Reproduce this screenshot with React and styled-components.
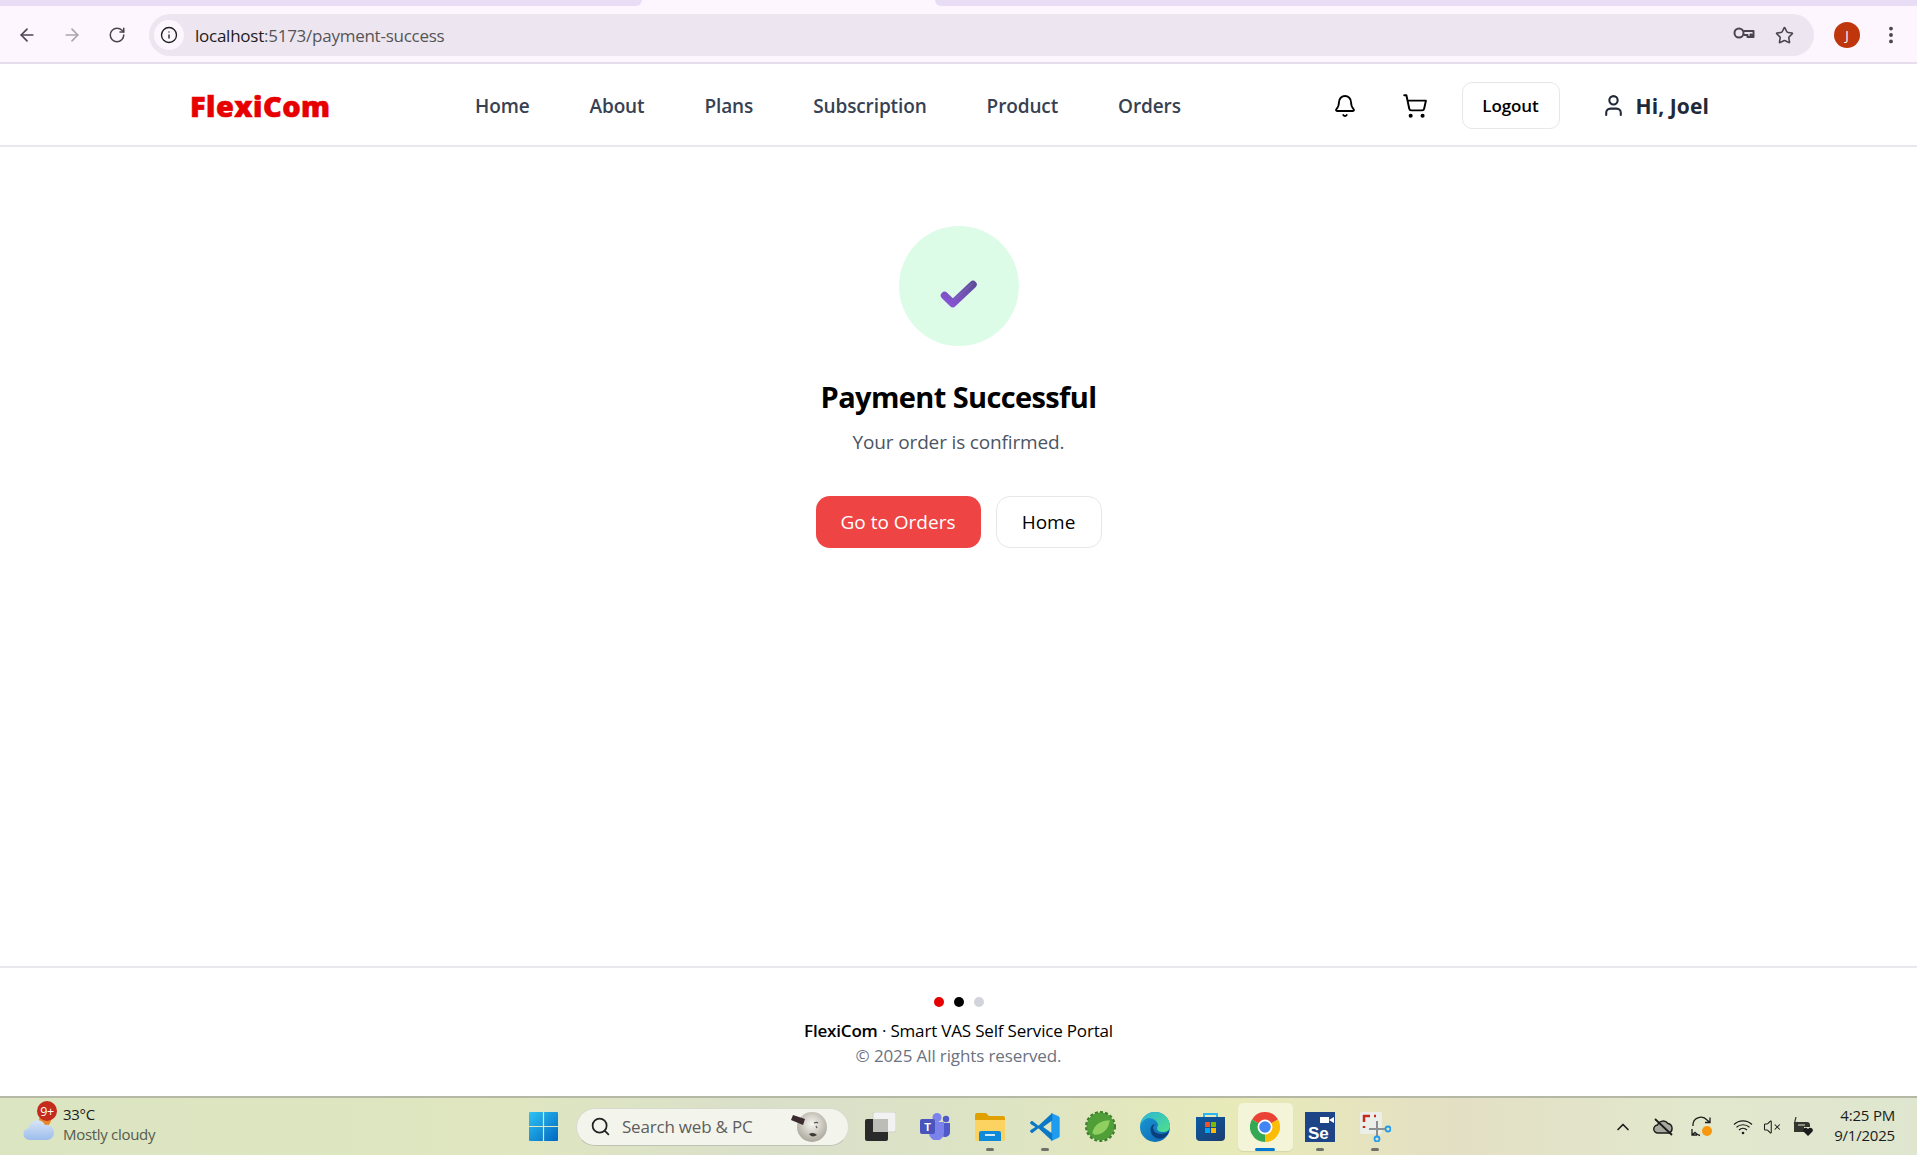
import React from "react";
import styled, { createGlobalStyle } from "styled-components";
import { ArrowLeft, ArrowRight, RotateCw, Info, Star, EllipsisVertical, Bell, ShoppingCart, User, Search, ChevronUp, VolumeX } from "lucide-react";

const Global = createGlobalStyle`
  html, body { margin: 0; padding: 0; height: 100%; background: #fff; }
  body { font-family: "Open Sans", "Noto Sans", "Liberation Sans", sans-serif; }
  * { box-sizing: border-box; }
`;

const Page = styled.div`
  width: 1917px; height: 1155px; display: flex; flex-direction: column; overflow: hidden; background: #fff;
`;

/* ---------- browser chrome ---------- */
const TabStrip = styled.div`
  height: 6px; flex: none; background: #fdf6ff; display: flex;
`;
const TabRest = styled.div`
  height: 6px; background: #e9dcf5; width: ${p => p.$w}; flex: ${p => p.$grow ? 1 : "none"};
  border-radius: ${p => p.$r};
  margin-left: ${p => p.$ml || 0};
`;
const Toolbar = styled.div`
  height: 58px; flex: none; background: #fdf6ff; border-bottom: 2px solid #e8dded; padding-top: 2px;
  display: flex; align-items: center; position: relative;
`;
const NavBtn = styled.span`
  width: 44px; height: 36px; display: flex; align-items: center; justify-content: center; flex: none;
  color: ${p => p.$dim ? "#aaa5ad" : "#4a454f"};
`;
const NavBtns = styled.div`
  display: flex; margin-left: 5px; margin-right: 10px; margin-top: -1px; gap: 1px;
`;
const Omnibox = styled.div`
  width: 1665px; height: 42px; border-radius: 21px; background: #ede6f1; display: flex; align-items: center; padding: 0 0 0 5px;
`;
const InfoBubble = styled.span`
  width: 30px; height: 30px; border-radius: 50%; background: #fdf6ff; display: flex; align-items: center; justify-content: center; color: #1f1f1f; flex: none;
`;
const Url = styled.div`
  margin-left: 11px; font-size: 17px; letter-spacing: -0.25px; color: #555; flex: 1;
  b { font-weight: 400; color: #1d1b20; }
`;
const OmniIcon = styled.span`
  width: 40px; display: flex; justify-content: center; color: #4a454f; flex: none;
`;
const OmniEnd = styled.div`
  display: flex; margin-right: 10px;
`;
const Avatar = styled.span`
  width: 26px; height: 26px; border-radius: 50%; background: #bf360c; color: #fff; font-size: 13px; display: flex; align-items: center; justify-content: center; margin-left: 20px; flex: none;
`;
const MenuBtn = styled.span`
  display: flex; margin-left: 20px; color: #4a454f;
`;

/* ---------- site header ---------- */
const SiteHeader = styled.header`
  height: 83px; flex: none; border-bottom: 2px solid #e8e9ec; background: #fff; display: flex; justify-content: center; padding-top: 2px;
`;
const HeaderInner = styled.div`
  width: 1537px; display: flex; align-items: center;
`;
const Logo = styled.div`
  width: 285px; font-weight: 800; font-size: 29px; color: #e60000; letter-spacing: 0.45px; -webkit-text-stroke: 0.6px #e60000;
`;
const Nav = styled.nav`
  display: flex; gap: 60px; flex: 1;
`;
const NavLink = styled.a`
  font-size: 19px; font-weight: 600; color: #374151; letter-spacing: -0.12px; white-space: nowrap;
`;
const HeaderRight = styled.div`
  display: flex; align-items: center; margin-right: 18px;
`;
const HeadIcon = styled.span`
  display: flex; color: #000; width: 70px; justify-content: center; flex: none;
`;
const LogoutBtn = styled.button`
  width: 98px; height: 47px; border: 1px solid #e5e7eb; border-radius: 10px; background: #fff; font: 600 17px "Open Sans", sans-serif; letter-spacing: -0.1px; color: #000; margin-left: 12px;
`;
const UserBox = styled.div`
  display: flex; align-items: center; gap: 10px; margin-left: 41px; color: #1f2937; font-size: 21px; font-weight: 700; letter-spacing: 0.1px;
`;

/* ---------- main ---------- */
const Main = styled.main`
  flex: 1; display: flex; flex-direction: column; align-items: center; padding-top: 79px; background: #fff;
`;
const SuccessCircle = styled.div`
  width: 120px; height: 120px; border-radius: 50%; background: #dcfce7; display: flex; align-items: center; justify-content: center; padding-top: 15px;
`;
const Title = styled.h1`
  margin: 31px 0 0; font-size: 29px; line-height: 40px; font-weight: 700; color: #000; letter-spacing: -0.62px;
`;
const Subtitle = styled.p`
  margin: 11px 0 0; font-size: 19px; line-height: 28px; color: #4b5563; letter-spacing: -0.15px;
`;
const Buttons = styled.div`
  display: flex; gap: 15px; margin-top: 40px;
`;
const Primary = styled.button`
  width: 165px; height: 52px; border: 0; border-radius: 14px; background: #ef4444; color: #fff; font: 400 19px "Open Sans", sans-serif;
`;
const Secondary = styled.button`
  width: 106px; height: 52px; border: 1px solid #e5e7eb; border-radius: 14px; background: #fff; color: #000; font: 400 19px "Open Sans", sans-serif;
`;

/* ---------- footer ---------- */
const Footer = styled.footer`
  height: 130px; flex: none; border-top: 2px solid #e8e9ec; background: #fff; display: flex; flex-direction: column; align-items: center; padding-top: 29px;
`;
const Dots = styled.div`
  display: flex; gap: 10px; height: 10px;
`;
const Dot = styled.span`
  width: 10px; height: 10px; border-radius: 50%; background: ${p => p.$c};
`;
const FootLine = styled.div`
  margin-top: 11px; font-size: 17px; line-height: 25px; color: #000; letter-spacing: -0.18px;
  b { font-weight: 600; }
`;
const FootCopy = styled.div`
  font-size: 17px; line-height: 25px; color: #6b7280; letter-spacing: -0.12px;
`;

/* ---------- taskbar ---------- */
const Taskbar = styled.div`
  height: 59px; flex: none; border-top: 2px solid #b5b8a4;
  background: linear-gradient(90deg, #dbe5c1 0%, #dfe6c0 27%, #dadfca 40%, #dde4c4 52%, #e8eab8 65%, #e3dfc4 76%, #e2e8cd 88%, #dfe6cf 100%);
  display: grid; grid-template-columns: 516px 1fr auto; align-items: center; position: relative;
`;
const Weather = styled.div`
  display: flex; align-items: center; padding-left: 23px; position: relative; margin-bottom: 5px;
`;
const Badge = styled.span`
  position: absolute; left: 37px; top: -3px; width: 20px; height: 20px; border-radius: 50%; background: #c42b1c; color: #fff; font-size: 12.5px; display: flex; align-items: center; justify-content: center; letter-spacing: -0.3px;
`;
const WeatherText = styled.div`
  margin-left: 9px; font-size: 15px; line-height: 20px; color: #1b1b1b; letter-spacing: -0.3px;
  small { display: block; font-size: 15px; color: #555a50; }
`;
const Center = styled.div`
  display: flex; align-items: center;
`;
const TaskItem = styled.div`
  width: ${p => p.$w || "55px"}; height: 48px; flex: none; display: flex; align-items: center; justify-content: center; position: relative;
  margin-left: ${p => p.$ml || 0};
  ${p => p.$active && "background: #f3f4d8; border-radius: 5px; box-shadow: 0 1px 1px rgba(0,0,0,.08);"}
`;
const RunDot = styled.span`
  position: absolute; bottom: 0; left: 50%; transform: translateX(-50%); width: ${p => p.$active ? "20px" : "8px"}; height: 3px; border-radius: 2px; background: ${p => p.$active ? "#0078d4" : "#6f7268"};
`;
const SearchPill = styled.div`
  width: 273px; height: 38px; margin-left: 5px; flex: none; border-radius: 19px; background: #f3f4ec; border: 1px solid #d8dacd; border-bottom-color: #bfc1b4; display: flex; align-items: center; padding-left: 13px; position: relative;
`;
const SearchText = styled.span`
  font-size: 17px; color: #5d5d5d; margin-left: 11px; flex: 1; letter-spacing: -0.2px;
`;
const MoonGap = styled.span`
  width: 20px; flex: none;
`;
const Tray = styled.div`
  display: flex; align-items: center; padding-right: 22px;
`;
const TrayIcon = styled.span`
  display: flex; justify-content: center; align-items: center; width: ${p => p.$w || "40px"}; color: #1c1c1c; flex: none;
`;
const Clock = styled.div`
  margin-left: 11px; margin-bottom: 4px; text-align: right; font-size: 15px; line-height: 20px; color: #1b1b1b; letter-spacing: -0.2px; white-space: nowrap;
`;

/* ---------- drawn icons ---------- */
const KeyIcon = () => (
  <svg width="22" height="14" viewBox="0 0 22 14" fill="none" stroke="#4a454f" strokeWidth="2">
    <circle cx="6" cy="7" r="4.5" /><path d="M10.5 5h10v6h-2V8.5h-1V11h-3V9h-4" strokeLinejoin="round" />
  </svg>
);
const Check = () => (
  <svg width="38" height="28" viewBox="0 0 38 28">
    <defs>
      <linearGradient id="chk" x1="0" y1="1" x2="1" y2="0"><stop offset="0" stopColor="#8a55d8" /><stop offset="1" stopColor="#5f4c9c" /></linearGradient>
    </defs>
    <path d="M4.500 15.500 L12.800 23.500 L33 4.500" fill="none" stroke="url(#chk)" strokeWidth="7.500" strokeLinecap="round" strokeLinejoin="round" />
    <path d="M14 20 L32 4" fill="none" stroke="#7a6cb0" strokeOpacity=".45" strokeWidth="2" strokeLinecap="round" />
  </svg>
);
const CloudIcon = () => (
  <svg width="31" height="36" viewBox="0 0 31 36">
    <defs><linearGradient id="cl" x1="0" y1="0" x2="0" y2="1"><stop offset="0" stopColor="#d6e4f7" /><stop offset="1" stopColor="#9dbdeb" /></linearGradient></defs>
    <circle cx="22" cy="14" r="6" fill="#e8862a" />
    <path d="M7 34a6 6 0 0 1-1-12 8.500 8.500 0 0 1 16-3 7 7 0 0 1 3 15z" fill="url(#cl)" />
  </svg>
);
const WinLogo = () => (
  <svg width="29" height="29" viewBox="0 0 29 29">
    <defs><linearGradient id="win" x1="0" y1="0" x2="1" y2="1"><stop offset="0" stopColor="#2ec3f5" /><stop offset="1" stopColor="#0067c0" /></linearGradient></defs>
    <path d="M1 0h12.900v13.900H0V1a1 1 0 0 1 1-1zM15.100 0H28a1 1 0 0 1 1 1v12.900H15.100zM0 15.100h13.900V29H1a1 1 0 0 1-1-1zM15.100 15.100H29V28a1 1 0 0 1-1 1H15.100z" fill="url(#win)" />
  </svg>
);
const MoonIcon = () => (
  <svg width="38" height="32" viewBox="0 0 38 32">
    <defs><radialGradient id="moon" cx=".5" cy=".4" r=".6"><stop offset="0" stopColor="#f7f6ef" /><stop offset="1" stopColor="#aaa79c" /></radialGradient></defs>
    <circle cx="22" cy="16" r="15" fill="url(#moon)" />
    <path d="M3 4l12 4-2 6L1 9z" fill="#3b2a2e" />
    <path d="M19 23c3-2 6-1 8 1-3 2-6 2-8-1z" fill="#3f3733" />
    <path d="M24 12c2-1 3-1 4 0M26 15l1 2" stroke="#555" strokeWidth="1.200" fill="none" />
  </svg>
);
const TaskView = () => (
  <svg width="31" height="29" viewBox="0 0 31 29">
    <rect x="8" y="0" width="23" height="20" rx="2" fill="#f2f2f2" stroke="#d0d0c8" />
    <rect x="0" y="7" width="23" height="22" rx="2" fill="#2a2a2a" />
    <rect x="8" y="7" width="15" height="13" fill="#bdbdb8" />
  </svg>
);
const Teams = () => (
  <svg width="31" height="27" viewBox="0 0 31 27">
    <circle cx="17" cy="4.500" r="4.500" fill="#7b83eb" /><circle cx="26" cy="6" r="3.200" fill="#5059c9" />
    <path d="M21 10h9v9a5 5 0 0 1-9 3z" fill="#5059c9" />
    <path d="M9 9h15v11a7 7 0 0 1-15 0z" fill="#7b83eb" />
    <rect x="0" y="6" width="15" height="15" rx="2" fill="#4b53bc" />
    <text x="7.500" y="17.500" fontSize="11" fontWeight="700" fill="#fff" textAnchor="middle" fontFamily="Liberation Sans">T</text>
  </svg>
);
const Folder = () => (
  <svg width="30" height="28" viewBox="0 0 30 28">
    <path d="M0 2a2 2 0 0 1 2-2h9l3 3h14a2 2 0 0 1 2 2v4H0z" fill="#e0a100" />
    <path d="M0 7h30v19a2 2 0 0 1-2 2H2a2 2 0 0 1-2-2z" fill="#fcd361" />
    <path d="M6 18h18a2 2 0 0 1 2 2v8H4v-8a2 2 0 0 1 2-2z" fill="#0f8ad8" />
    <rect x="10" y="21" width="10" height="2" fill="#cfe8fb" />
  </svg>
);
const VSCode = () => (
  <svg width="30" height="30" viewBox="0 0 100 100">
    <path d="M71 3l24 11c2 1 4 4 4 7v58c0 3-2 6-4 7L71 97V3z" fill="#1f9cf0" />
    <path d="M74 3 L28 46 9 31c-2-1-4-1-6 1l-2 2c-1 2-1 4 1 6l16 10L2 60c-2 2-2 4-1 6l2 2c2 2 4 2 6 1l19-15 46 43V72L44 50 74 28z" fill="#0a78c6" />
  </svg>
);
const Spring = () => (
  <svg width="31" height="31" viewBox="0 0 30 30">
    <circle cx="15" cy="15" r="13.500" fill="#4f9e38" />
    <circle cx="15" cy="15" r="14" fill="none" stroke="#3d7f2c" strokeWidth="2" strokeDasharray="3 2" />
    <path d="M7 21c2-8 9-12 17-12-1 8-6 14-14 14-1 0-2-1-3-2z" fill="#8fcf5f" />
  </svg>
);
const Edge = () => (
  <svg width="30" height="30" viewBox="0 0 30 30">
    <defs>
      <linearGradient id="ed" x1="0" y1="0" x2="1" y2="1"><stop offset="0" stopColor="#1c9ad6" /><stop offset="1" stopColor="#0a63ad" /></linearGradient>
      <linearGradient id="edg" x1="0" y1="0" x2="1" y2="1"><stop offset="0" stopColor="#2bb5d8" /><stop offset="1" stopColor="#50e08a" /></linearGradient>
    </defs>
    <circle cx="15" cy="15" r="15" fill="url(#ed)" />
    <path d="M15 0c8 0 15 6 15 14 0 4-3 6-7 6-3 0-6-1-6-4 0-1 1-2 1-3 0-3-4-7-9-7C6 6 2 9 0 13 1 6 7 0 15 0z" fill="url(#edg)" />
    <path d="M15 12c-4 1-5 4-4 8 1 5 7 8 12 6 2-1 5-3 6-7-2 2-5 3-8 3-5 0-8-3-8-7z" fill="#0b3f7d" />
  </svg>
);
const Store = () => (
  <svg width="29" height="29" viewBox="0 0 29 29">
    <defs><linearGradient id="st" x1="0" y1="0" x2="1" y2="1"><stop offset="0" stopColor="#0a5aa5" /><stop offset="1" stopColor="#1c3d6e" /></linearGradient></defs>
    <path d="M8 6V2h13v4" fill="none" stroke="#2bb6ee" strokeWidth="2" />
    <path d="M0 5h29v20a4 4 0 0 1-4 4H4a4 4 0 0 1-4-4z" fill="url(#st)" />
    <rect x="9" y="10" width="5" height="5" fill="#f25022" /><rect x="15" y="10" width="5" height="5" fill="#7fba00" />
    <rect x="9" y="16" width="5" height="5" fill="#00a4ef" /><rect x="15" y="16" width="5" height="5" fill="#ffb900" />
  </svg>
);
const ChromeLogo = () => (
  <svg width="30" height="30" viewBox="0 0 30 30">
    <path d="M15 15 L2 7.500 A15 15 0 0 1 28 7.500z" fill="#ea4335" />
    <path d="M15 15 L28 7.500 A15 15 0 0 1 15 30z" fill="#fbbc04" />
    <path d="M15 15 L15 30 A15 15 0 0 1 2 7.500z" fill="#34a853" />
    <circle cx="15" cy="15" r="7.500" fill="#fff" /><circle cx="15" cy="15" r="5.800" fill="#4285f4" />
  </svg>
);
const Selenium = () => (
  <svg width="30" height="30" viewBox="0 0 30 30">
    <rect width="30" height="30" fill="#1c4486" />
    <path d="M15 5h9v6h-9zM24 8l5-3v6z" fill="#fff" />
    <text x="3" y="27" fontSize="17" fontWeight="700" fill="#fff" fontFamily="Liberation Sans">Se</text>
  </svg>
);
const Snip = () => (
  <svg width="31" height="30" viewBox="0 0 31 30" fill="none">
    <rect x="0" y="0" width="22" height="22" rx="2" fill="#eceeea" />
    <path d="M4 10V4h6M14 4h2M4 14v2" stroke="#c42b1c" strokeWidth="2.500" />
    <path d="M17 9v15M9 17h17" stroke="#8a8f90" strokeWidth="2" />
    <circle cx="17" cy="27" r="2.500" stroke="#1f9cf0" strokeWidth="1.800" /><circle cx="28" cy="17" r="2.500" stroke="#1f9cf0" strokeWidth="1.800" />
  </svg>
);
const CloudOff = () => (
  <svg width="21" height="18" viewBox="0 0 21 18" fill="none" stroke="#1c1c1c" strokeWidth="1.400">
    <path d="M5 15a4 4 0 0 1-.5-8A6 6 0 0 1 15 5.500 5 5 0 0 1 16 15z" fill="#a6a89e" />
    <path d="M2 1l17 16" strokeWidth="1.800" />
  </svg>
);
const Sync = () => (
  <svg width="24" height="22" viewBox="0 0 24 22" fill="none" stroke="#1c1c1c" strokeWidth="1.300">
    <path d="M2 10a8 8 0 0 1 14-6l3 2.500M19 1.500v5h-5" />
    <path d="M1 13v6h5M1 19l3-2.500c1.500 1.500 2.500 2.500 5 3" />
    <circle cx="16" cy="15" r="5" fill="#f7970f" stroke="none" />
  </svg>
);
const WifiIcon = () => (
  <svg width="20" height="16" viewBox="0 0 20 16" fill="none" stroke="#1c1c1c" strokeWidth="1.200">
    <path d="M1 5.500a13 13 0 0 1 18 0M3.500 8.300a9.500 9.500 0 0 1 13 0M6 11a6 6 0 0 1 8 0" /><circle cx="10" cy="14" r="1.300" fill="#1c1c1c" stroke="none" />
  </svg>
);
const Battery = () => (
  <svg width="21" height="20" viewBox="0 0 21 20" fill="none">
    <path d="M2 5h13a3 3 0 0 1 3 3v2h-6v5H2z" fill="#33352f" />
    <path d="M4 0l-1.500 6L5 5.500 4 9" stroke="#33352f" strokeWidth="1.200" />
    <path d="M6 8h7" stroke="#e6e8d0" strokeWidth="1" />
    <path d="M16 19l-4.500-4.500a2.500 2.500 0 0 1 4.500-2.300 2.500 2.500 0 0 1 4.500 2.300z" fill="#1c1c1c" />
  </svg>
);

const links = ["Home", "About", "Plans", "Subscription", "Product", "Orders"];

export default function App() {
  return (
    <Page>
      <Global />
      <TabStrip>
        <TabRest $w="642px" $r="0 0 10px 0" />
        <TabRest $grow $ml="293px" $r="0 0 0 10px" />
      </TabStrip>
      <Toolbar>
        <NavBtns>
          <NavBtn><ArrowLeft size={20} strokeWidth={2} /></NavBtn>
          <NavBtn $dim><ArrowRight size={20} strokeWidth={2} /></NavBtn>
          <NavBtn><RotateCw size={18} strokeWidth={2} /></NavBtn>
        </NavBtns>
        <Omnibox>
          <InfoBubble><Info size={18} strokeWidth={1.8} /></InfoBubble>
          <Url><b>localhost</b>:5173/payment-success</Url>
          <OmniEnd>
            <OmniIcon><KeyIcon /></OmniIcon>
            <OmniIcon><Star size={19} strokeWidth={2} /></OmniIcon>
          </OmniEnd>
        </Omnibox>
        <Avatar>J</Avatar>
        <MenuBtn><EllipsisVertical size={22} strokeWidth={2.2} /></MenuBtn>
      </Toolbar>

      <SiteHeader>
        <HeaderInner>
          <Logo>FlexiCom</Logo>
          <Nav>
            {links.map(l => <NavLink key={l}>{l}</NavLink>)}
          </Nav>
          <HeaderRight>
            <HeadIcon><Bell size={24} strokeWidth={1.8} /></HeadIcon>
            <HeadIcon><ShoppingCart size={26} strokeWidth={1.8} /></HeadIcon>
            <LogoutBtn>Logout</LogoutBtn>
            <UserBox><User size={25} strokeWidth={2} />Hi, Joel</UserBox>
          </HeaderRight>
        </HeaderInner>
      </SiteHeader>

      <Main>
        <SuccessCircle><Check /></SuccessCircle>
        <Title>Payment Successful</Title>
        <Subtitle>Your order is confirmed.</Subtitle>
        <Buttons>
          <Primary>Go to Orders</Primary>
          <Secondary>Home</Secondary>
        </Buttons>
      </Main>

      <Footer>
        <Dots><Dot $c="#e60000" /><Dot $c="#000" /><Dot $c="#d1d5db" /></Dots>
        <FootLine><b>FlexiCom</b> · Smart VAS Self Service Portal</FootLine>
        <FootCopy>© 2025 All rights reserved.</FootCopy>
      </Footer>

      <Taskbar>
        <Weather>
          <CloudIcon />
          <Badge>9+</Badge>
          <WeatherText>33°C<small>Mostly cloudy</small></WeatherText>
        </Weather>
        <Center>
          <TaskItem><WinLogo /></TaskItem>
          <SearchPill>
            <Search size={21} strokeWidth={2} color="#222" />
            <SearchText>Search web &amp; PC</SearchText>
            <MoonIcon />
            <MoonGap />
          </SearchPill>
          <TaskItem $ml="3.5px"><TaskView /></TaskItem>
          <TaskItem><Teams /></TaskItem>
          <TaskItem><Folder /><RunDot /></TaskItem>
          <TaskItem><VSCode /><RunDot /></TaskItem>
          <TaskItem><Spring /></TaskItem>
          <TaskItem><Edge /></TaskItem>
          <TaskItem><Store /></TaskItem>
          <TaskItem $active><ChromeLogo /><RunDot $active /></TaskItem>
          <TaskItem><Selenium /><RunDot /></TaskItem>
          <TaskItem><Snip /><RunDot /></TaskItem>
        </Center>
        <Tray>
          <TrayIcon><ChevronUp size={20} strokeWidth={2} /></TrayIcon>
          <TrayIcon><CloudOff /></TrayIcon>
          <TrayIcon><Sync /></TrayIcon>
          <TrayIcon><WifiIcon /></TrayIcon>
          <TrayIcon $w="18px"><VolumeX size={18} strokeWidth={1.4} /></TrayIcon>
          <TrayIcon $w="42px"><Battery /></TrayIcon>
          <Clock>4:25 PM<br />9/1/2025</Clock>
        </Tray>
      </Taskbar>
    </Page>
  );
}
